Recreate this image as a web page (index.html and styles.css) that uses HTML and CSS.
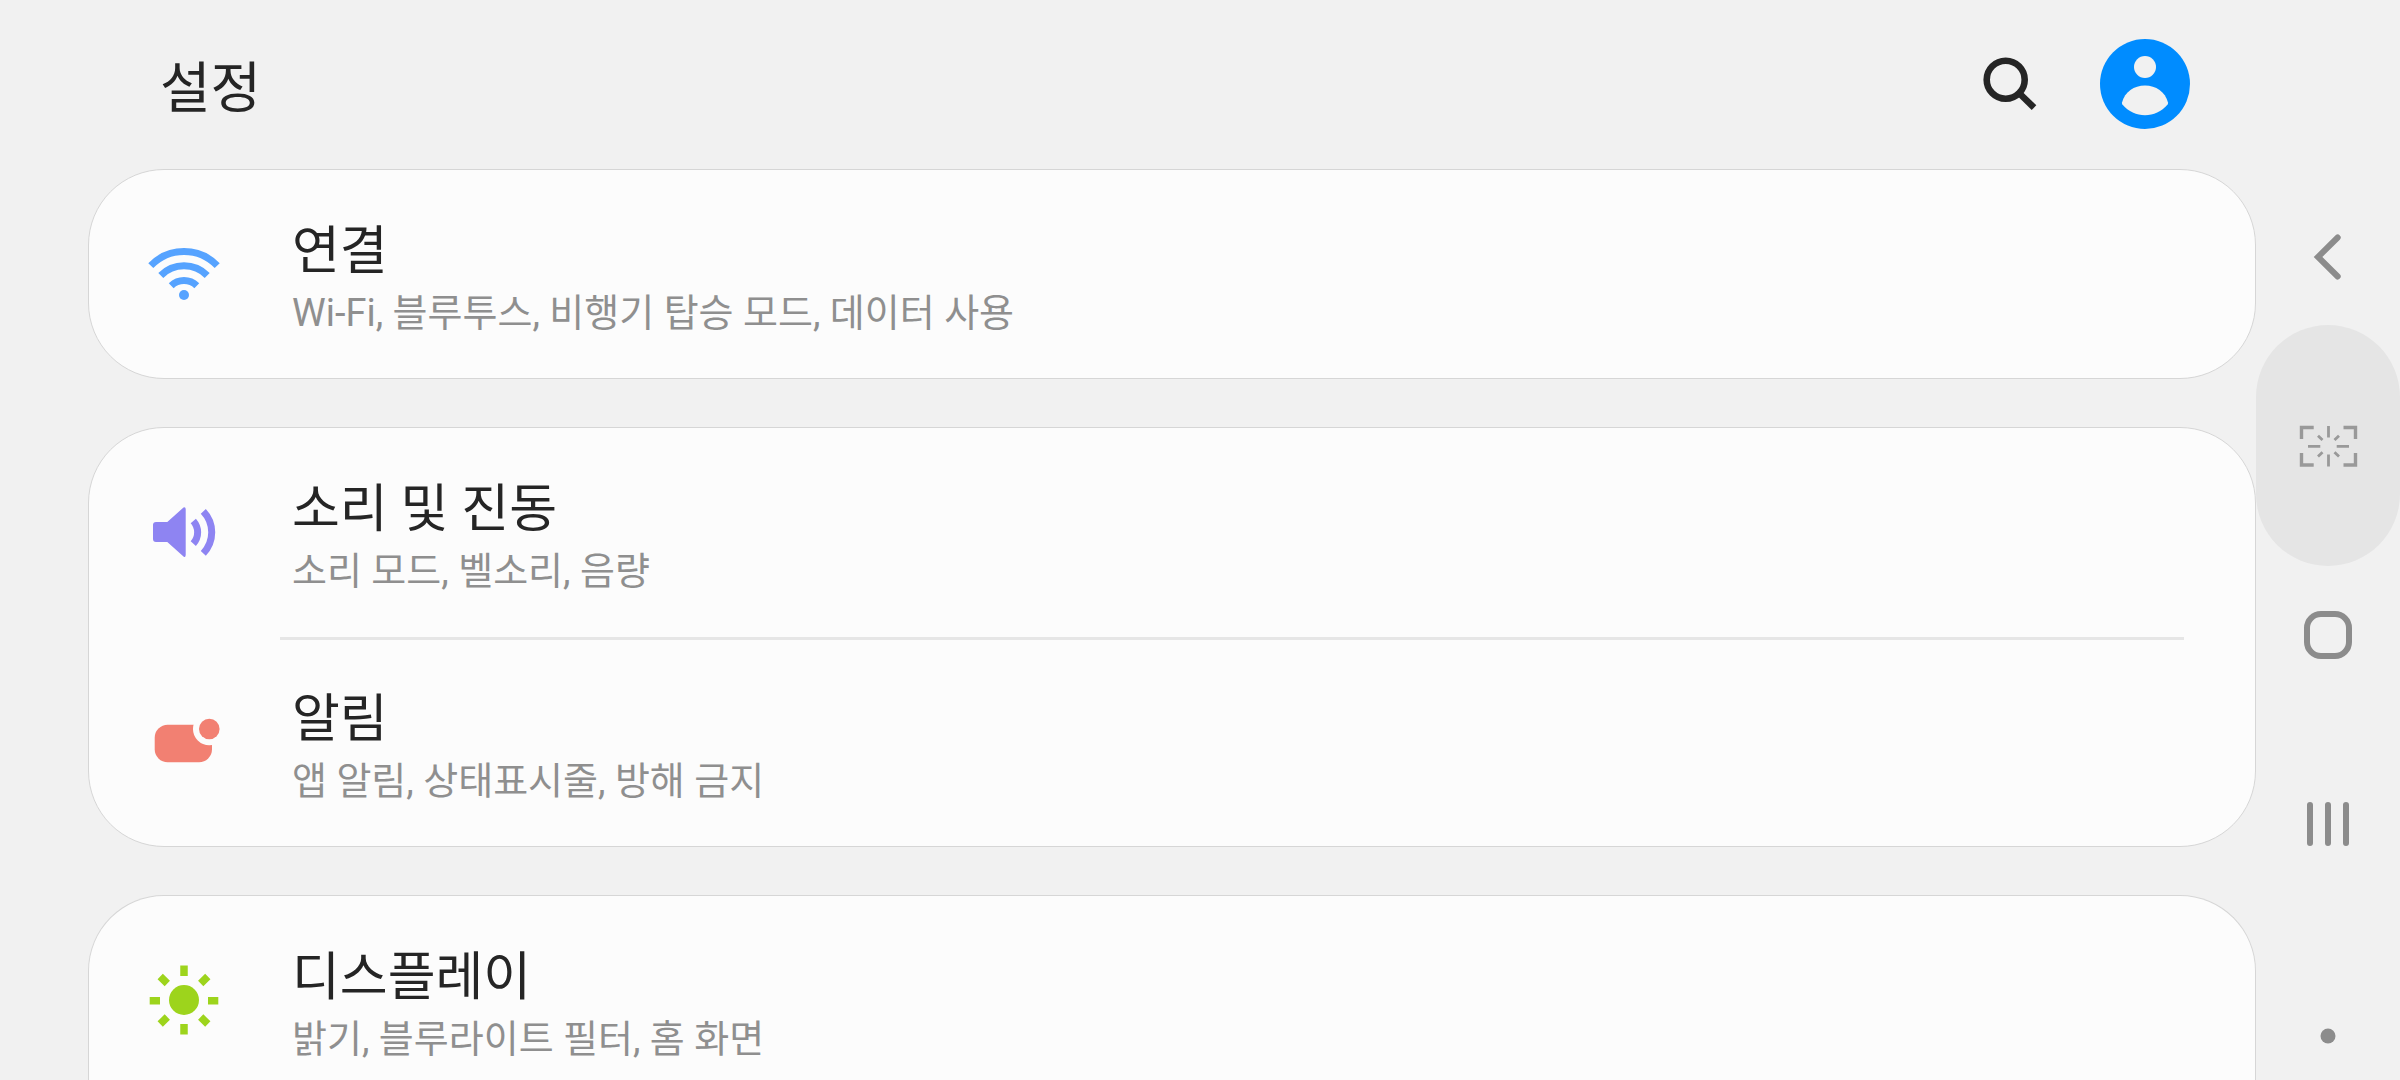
FILE: index.html
```html
<!DOCTYPE html>
<html lang="ko">
<head>
  <meta charset="UTF-8">
  <meta name="viewport" content="width=device-width, initial-scale=1.0">
  <title>설정</title>
  <link rel="stylesheet" href="styles.css">
</head>
<body>

  <main>
    <header>
      <h1>설정</h1>
      <button type="button" class="search" aria-label="검색">
        <svg class="icon" viewBox="0 0 72 72">
          <g fill="none" stroke="#252525">
            <circle cx="31.7" cy="31.7" r="19" stroke-width="6.6"/>
            <path d="M45 45L60 59.7" stroke-width="6.6"/>
          </g>
        </svg>
      </button>
      <button type="button" class="account" aria-label="계정">
        <svg viewBox="0 0 90 90">
          <circle cx="45" cy="45" r="45" fill="#008cff"/>
          <circle cx="45" cy="28" r="11" fill="#f1f1f1"/>
          <path d="M22.4 65.5Q21.8 64.6 22 63.6C24.8 53 34 46.6 45 46.6S65.2 53 68 63.6Q68.2 64.6 67.6 65.5C61.5 72.5 53.5 76.3 45 76.3S28.5 72.5 22.4 65.5Z" fill="#f1f1f1"/>
        </svg>
      </button>
    </header>

    <section class="card">
      <a href="#connections" class="row">
        <svg class="icon" viewBox="0 0 72 72">
          <g fill="none" stroke="#56a3ff" stroke-width="7">
            <path d="M2.8 27.7A45.9 45.9 0 0 1 69.2 27.7"/>
            <path d="M12.8 37.5A32.6 32.6 0 0 1 59.2 37.5"/>
            <path d="M23.2 47.7A18.4 18.4 0 0 1 48.8 47.7"/>
          </g>
          <circle cx="36" cy="57" r="5" fill="#56a3ff"/>
        </svg>
        <span class="text">
          <span class="title">연결</span>
          <span class="desc">Wi-Fi, 블루투스, 비행기 탑승 모드, 데이터 사용</span>
        </span>
      </a>
    </section>

    <section class="card">
      <a href="#sounds" class="row">
        <svg class="icon" viewBox="0 0 72 72">
          <path d="M8 26H19.3L35.5 11.5Q37.5 10.5 37.7 13V59Q37.5 62 35.5 60.5L19.3 46H8Q5 46 5 43V29Q5 26 8 26Z" fill="#8e84f2"/>
          <g fill="none" stroke="#8e84f2" stroke-width="7">
            <path d="M45.3 25A17 17 0 0 1 45.3 47.7"/>
            <path d="M55.3 15.3A30.4 30.4 0 0 1 55.3 57.3"/>
          </g>
        </svg>
        <span class="text">
          <span class="title">소리 및 진동</span>
          <span class="desc">소리 모드, 벨소리, 음량</span>
        </span>
      </a>
      <hr>
      <a href="#notifications" class="row">
        <svg class="icon" viewBox="0 0 72 72">
          <rect x="6.7" y="18.7" width="57.3" height="37.6" rx="13" fill="#f28072"/>
          <circle cx="61.3" cy="23" r="16.3" fill="#fcfcfc"/>
          <circle cx="61.3" cy="23" r="10.3" fill="#f28072"/>
        </svg>
        <span class="text">
          <span class="title">알림</span>
          <span class="desc">앱 알림, 상태표시줄, 방해 금지</span>
        </span>
      </a>
    </section>

    <section class="card open">
      <a href="#display" class="row">
        <svg class="icon" viewBox="0 0 72 72">
          <circle cx="36" cy="36" r="15" fill="#9dd41c"/>
          <g stroke="#9dd41c" stroke-width="7.5">
            <path d="M36 1.5V12M36 60V70.5M1.7 36.7H12M60 36.7H70.3"/>
            <path d="M12.2 12.5L19.3 19.5M59.8 12.5L52.7 19.5M12.2 60L19.3 53M59.8 60L52.7 53"/>
          </g>
        </svg>
        <span class="text">
          <span class="title">디스플레이</span>
          <span class="desc">밝기, 블루라이트 필터, 홈 화면</span>
        </span>
      </a>
    </section>
  </main>

  <nav>
    <button type="button" aria-label="뒤로">
      <svg class="icon" viewBox="0 0 72 72">
        <path d="M45.7 16.5L26 36L45.7 55.5" fill="none" stroke="#8c8c8c" stroke-width="6" stroke-linecap="round"/>
      </svg>
    </button>
    <button type="button" class="capture" aria-label="캡처">
      <svg class="icon" viewBox="0 0 72 72">
        <g fill="none" stroke="#999">
          <path d="M9.5 29V17.5H21.7M51.5 17.5H63.5V29M9.5 43V55H21.7M51.5 55H63.5V43" stroke-width="3.4"/>
          <path d="M36.5 16V27.5M36.5 44.5V56.5M16 36.3H28.3M44.7 36.3H57" stroke-width="2.8"/>
          <path d="M26 25.7L30.5 30M47 25.7L42.5 30M26 46.5L30.5 42.2M47 46.5L42.5 42.2" stroke-width="2.8"/>
        </g>
      </svg>
    </button>
    <button type="button" aria-label="홈">
      <svg class="icon" viewBox="0 0 72 72">
        <rect x="15" y="15" width="42" height="42" rx="14" fill="none" stroke="#8c8c8c" stroke-width="6"/>
      </svg>
    </button>
    <button type="button" aria-label="최근 앱">
      <svg class="icon" viewBox="0 0 72 72">
        <path d="M18 17V55M36 17V55M54 17V55" stroke="#8c8c8c" stroke-width="6" stroke-linecap="round"/>
      </svg>
    </button>
    <button type="button" class="pin" aria-label="내비게이션 바 숨기기">
      <svg class="icon" viewBox="0 0 72 72">
        <circle cx="36" cy="36" r="7.5" fill="#8c8c8c"/>
      </svg>
    </button>
  </nav>

</body>
</html>
```

FILE: styles.css
```css
* {
  margin: 0;
  padding: 0;
  box-sizing: border-box;
}

body {
  display: flex;
  height: 100vh;
  overflow: hidden;
  background-color: #f1f1f1;
  color: #252525;
  font-family: Roboto, "Noto Sans CJK KR", sans-serif;
}

main {
  display: flex;
  flex: 1;
  flex-direction: column;
  padding-left: 88px;
  overflow: hidden;
}

header {
  display: flex;
  flex-shrink: 0;
  align-items: center;
  height: 169px;
  padding: 0 66px 2px 72px;
}

h1 {
  flex: 1;
  padding-top: 8px;
  font-size: 55px;
  font-weight: 400;
  line-height: 80px;
}

button {
  display: flex;
  align-items: center;
  justify-content: center;
  border: none;
  background: none;
  cursor: pointer;
}

svg {
  display: block;
}

.icon {
  width: 72px;
  height: 72px;
  flex-shrink: 0;
}

.search {
  margin-right: 54px;
}

.account svg {
  width: 90px;
  height: 90px;
}

.card {
  flex-shrink: 0;
  margin-bottom: 48px;
  border: 1px solid #d6d6d6;
  border-radius: 76px;
  background-color: #fcfcfc;
}

/* the list goes on below the window edge */
.card.open {
  margin-bottom: 0;
  border-bottom: none;
  border-radius: 76px 76px 0 0;
}

.row {
  display: flex;
  align-items: center;
  gap: 72px;
  height: 208px;
  padding: 0 72px 0 59px;
  color: inherit;
  text-decoration: none;
}

.text {
  display: flex;
  flex-direction: column;
  padding-top: 10px;
}

.title {
  font-size: 52px;
  line-height: 68px;
}

.desc {
  color: #8f8f8f;
  font-size: 38px;
  line-height: 54px;
}

hr {
  height: 3px;
  margin: 1px 71px -2px 191px;
  border: none;
  background-color: #e6e6e6;
}

nav {
  display: flex;
  flex-direction: column;
  width: 144px;
  padding-top: 162px;
}

nav button {
  position: relative;
  height: 189px;
}

/* pressed highlight behind the capture key */
.capture::before {
  content: "";
  position: absolute;
  inset: -26px 0;
  border-radius: 72px;
  background-color: #e5e5e5;
}

.capture .icon {
  position: relative;
}

nav .pin {
  height: 88px;
  margin-top: auto;
}
```
